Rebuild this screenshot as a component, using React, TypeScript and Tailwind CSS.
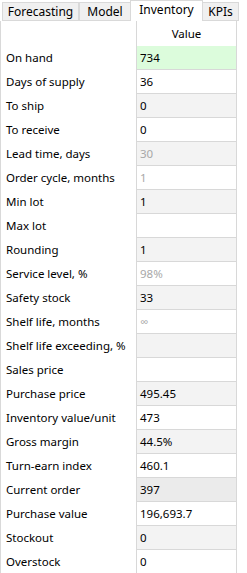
import React from "react";

type Row = {
  label: string;
  value: string;
  muted?: boolean;
  tone?: "green" | "gray" | "dark" | "white";
};

const rows: Row[] = [
  { label: "On hand", value: "734", tone: "green" },
  { label: "Days of supply", value: "36" },
  { label: "To ship", value: "0" },
  { label: "To receive", value: "0" },
  { label: "Lead time, days", value: "30", muted: true },
  { label: "Order cycle, months", value: "1", muted: true },
  { label: "Min lot", value: "1" },
  { label: "Max lot", value: "" },
  { label: "Rounding", value: "1" },
  { label: "Service level, %", value: "98%", muted: true },
  { label: "Safety stock", value: "33" },
  { label: "Shelf life, months", value: "∞", muted: true },
  { label: "Shelf life exceeding, %", value: "" },
  { label: "Sales price", value: "" },
  { label: "Purchase price", value: "495.45" },
  { label: "Inventory value/unit", value: "473" },
  { label: "Gross margin", value: "44.5%" },
  { label: "Turn-earn index", value: "460.1" },
  { label: "Current order", value: "397", tone: "dark" },
  { label: "Purchase value", value: "196,693.7" },
  { label: "Stockout", value: "0" },
  { label: "Overstock", value: "0" },
];

const tabs = [
  { name: "Forecasting", w: "w-[77px]" },
  { name: "Model", w: "w-[52px]" },
  { name: "Inventory", w: "w-[73px]", active: true },
  { name: "KPIs", w: "w-[37px]" },
];

function cellBg(row: Row, i: number) {
  if (row.tone === "green") return "bg-[#dcfcdc]";
  if (row.tone === "dark") return "bg-[#ebebeb]";
  return i % 2 === 0 ? "bg-[#f3f3f3]" : "bg-white";
}

export default function App() {
  return (
    <div
      className="w-[247px] h-[573px] bg-white overflow-hidden text-[11.5px] text-black"
      style={{ fontFamily: '"Noto Sans", "Open Sans", sans-serif' }}
    >
      <div className="flex items-end h-[21px] pl-[2px] text-[12px]">
        {tabs.map((t) =>
          t.active ? (
            <div
              key={t.name}
              className={`${t.w} h-[21px] pb-[2px] bg-white border border-b-0 border-[#d9d9d9] flex items-center justify-center -mx-px relative z-10`}
            >
              {t.name}
            </div>
          ) : (
            <div
              key={t.name}
              className={`${t.w} h-[19px] bg-[#f0f0f0] border border-[#d9d9d9] flex items-center justify-center`}
            >
              {t.name}
            </div>
          ),
        )}
      </div>
      <div className="border-l border-[#d9d9d9] h-full">
        <div className="flex h-[25px]">
          <div className="w-[135px]" />
          <div className="w-[101px] border-x border-[#d8d8d8] flex items-center justify-center">
            Value
          </div>
        </div>
        {rows.map((r, i) => (
          <div key={r.label} className="flex h-[24px]">
            <div className="w-[135px] pl-[5px] flex items-center whitespace-nowrap">
              {r.label}
            </div>
            <div
              className={`w-[101px] border-x border-b border-[#d8d8d8] pl-[3px] flex items-center ${cellBg(
                r,
                i,
              )} ${r.muted ? "text-[#a8a8a8]" : ""}`}
            >
              {r.value}
            </div>
          </div>
        ))}
      </div>
    </div>
  );
}
